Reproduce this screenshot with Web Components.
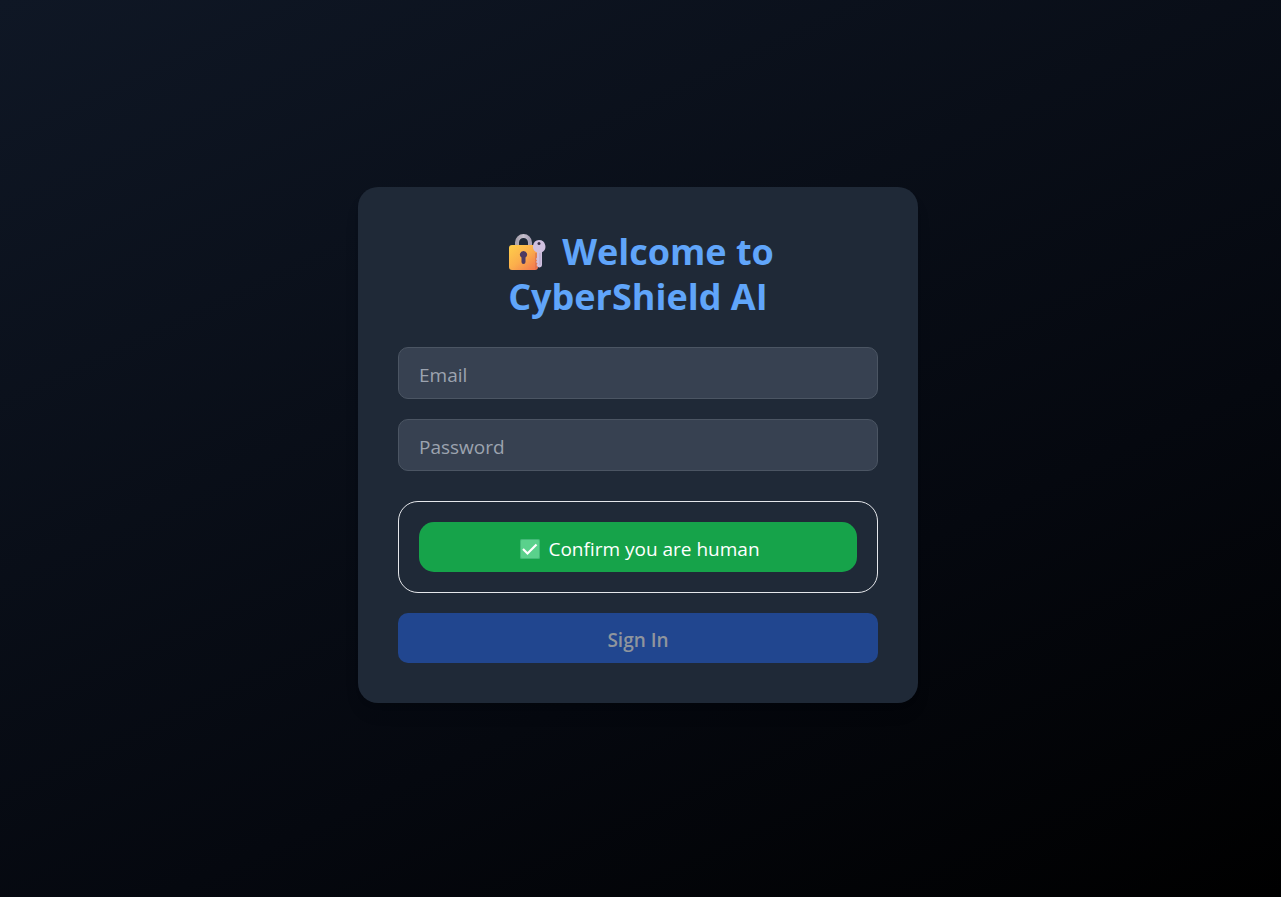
<!DOCTYPE html>
<html lang="en">
<head>
<meta charset="UTF-8">
<meta name="viewport" content="width=device-width, initial-scale=1.0">
<title>CyberShield AI</title>
<style>
    body {
        margin: 0;
        background-color: #000;
        font-family: "Open Sans", "Noto Sans", sans-serif;
    }
</style>
</head>
<body>

<login-page>
    <login-card>
        <login-title slot="title">Welcome to<br>CyberShield AI</login-title>
        <text-field type="email" name="email" placeholder="Email"></text-field>
        <text-field type="password" name="password" placeholder="Password"></text-field>
        <human-check>Confirm you are human</human-check>
        <submit-button disabled>Sign In</submit-button>
    </login-card>
</login-page>

<script>
class LoginPage extends HTMLElement {

    constructor() {
        super();
        this.attachShadow({mode: 'open'});
        this.shadowRoot.innerHTML =
        `
        <style>
        :host {
            display: block;
            background: linear-gradient(155deg, #0f1725, #05080f 65%, #000);
        }
        main {
            box-sizing: border-box;
            min-height: 100vh;
            display: flex;
            align-items: center;
            justify-content: center;
            padding: 0 5px 7px 0;
        }
        </style>
        <main><slot></slot></main>
        `;
    }
}

class LoginCard extends HTMLElement {

    constructor() {
        super();
        this.attachShadow({mode: 'open'});
        this.shadowRoot.innerHTML =
        `
        <style>
        :host {
            display: block;
            box-sizing: border-box;
            width: 100%;
            max-width: 560px;
            padding: 40px;
            border-radius: 20px;
            background-color: #1f2937;
            box-shadow: 0 12px 18px -4px rgba(0, 0, 0, 0.1), 0 5px 8px -5px rgba(0, 0, 0, 0.1);
        }
        form {
            display: flex;
            flex-direction: column;
            gap: 20px;
            margin: 0;
        }
        ::slotted(human-check) {
            margin-top: 10px;
        }
        </style>
        <slot name="title"></slot>
        <form><slot></slot></form>
        `;
    }
}

class LoginTitle extends HTMLElement {

    constructor() {
        super();
        this.attachShadow({mode: 'open'});
        this.shadowRoot.innerHTML =
        `
        <style>
        :host {
            display: flex;
            justify-content: center;
            padding: 2px 0 28px;
        }
        h1 {
            margin: 0;
            padding-left: 6px;
            color: #60a5fa;
            font-size: 36px;
            line-height: 45px;
            font-weight: 700;
        }
        svg {
            width: 38px;
            height: 38px;
            margin-right: 16px;
            vertical-align: -7px;
        }
        </style>
        <h1><svg viewBox="0 0 38 38" aria-hidden="true">
            <defs>
                <linearGradient id="body" x1="0" y1="0" x2="1" y2="1">
                    <stop offset="0" stop-color="#ffcf4a"/>
                    <stop offset="0.5" stop-color="#fbae4c"/>
                    <stop offset="1" stop-color="#f2704f"/>
                </linearGradient>
                <linearGradient id="shackle" x1="0" y1="0" x2="1" y2="0">
                    <stop offset="0" stop-color="#a8a2ae"/>
                    <stop offset="0.5" stop-color="#c6bfcd"/>
                    <stop offset="1" stop-color="#a79fb3"/>
                </linearGradient>
            </defs>
            <path d="M9 14V8.500a6.500 6.500 0 0 1 13 0V14" fill="none" stroke="url(#shackle)" stroke-width="4"/>
            <rect x="1" y="11" width="29" height="25" rx="3" fill="url(#body)"/>
            <path d="M15.500 17a3.600 3.600 0 0 1 2 6.600V28a2 2 0 0 1-4 0v-4.400a3.600 3.600 0 0 1 2-6.600z" fill="#4d3b62"/>
            <path d="M27 19h3v14l-3 2z" fill="#c4614f" opacity="0.4"/>
            <path fill-rule="evenodd" d="M31 6a6.500 6.500 0 0 1 3 12.200V31a2.500 2.500 0 0 1-4.500 1.500L28.500 31l1-1.500-1.500-1.500 1-1.500-1-1.500 1-1.500v-5A6.500 6.500 0 0 1 31 6z" fill="#d0c0df"/>
            <circle cx="31" cy="9.500" r="1.500" fill="#3a3048"/>
            <path d="M32 19v12" stroke="#b5a5c8" stroke-width="1"/>
        </svg><slot></slot></h1>
        `;
    }
}

class TextField extends HTMLElement {

    constructor() {
        super();
        this.attachShadow({mode: 'open'});
        this.shadowRoot.innerHTML =
        `
        <style>
        :host {
            display: block;
        }
        input {
            display: block;
            box-sizing: border-box;
            width: 100%;
            height: 52px;
            padding: 4px 20px 0;
            border: 1px solid #4b5563;
            border-radius: 10px;
            background-color: #374151;
            color: #fff;
            font: inherit;
            font-size: 19px;
        }
        input::placeholder {
            color: #9ca3af;
        }
        input:focus {
            outline: 2px solid #3b82f6;
        }
        </style>
        <input>
        `;
        const input = this.shadowRoot.querySelector('input');
        input.type = this.getAttribute('type');
        input.name = this.getAttribute('name');
        input.placeholder = this.getAttribute('placeholder');
        input.setAttribute('aria-label', this.getAttribute('placeholder'));
    }
}

class HumanCheck extends HTMLElement {

    constructor() {
        super();
        this.attachShadow({mode: 'open'});
        this.shadowRoot.innerHTML =
        `
        <style>
        :host {
            display: block;
            padding: 20px;
            border: 1px solid #e5e7eb;
            border-radius: 20px;
        }
        button {
            display: flex;
            align-items: center;
            justify-content: center;
            gap: 8px;
            width: 100%;
            height: 50px;
            padding: 4px 0 0 4px;
            border: none;
            border-radius: 15px;
            background-color: #16a34a;
            color: #fff;
            font: inherit;
            font-size: 19px;
        }
        button:hover {
            background-color: #15803d;
        }
        svg {
            width: 20px;
            height: 20px;
        }
        </style>
        <button type="button">
            <svg viewBox="0 0 20 20" aria-hidden="true">
                <rect width="20" height="20" rx="1.500" fill="#43b978"/>
                <rect x="1" y="1" width="18" height="18" rx="1" fill="#5ad18c"/>
                <path d="M3 10l4.500 4.500 9-9" fill="none" stroke="#fff" stroke-width="2.200"/>
            </svg>
            <span><slot></slot></span>
        </button>
        `;
    }
}

class SubmitButton extends HTMLElement {

    constructor() {
        super();
        this.attachShadow({mode: 'open'});
        this.shadowRoot.innerHTML =
        `
        <style>
        :host {
            display: block;
        }
        button {
            display: block;
            width: 100%;
            height: 50px;
            padding: 4px 0 0;
            border: none;
            border-radius: 10px;
            background-color: #2563eb;
            color: #fff;
            font: inherit;
            font-size: 19px;
            font-weight: 600;
        }
        button:disabled {
            background-color: #21468f;
            color: #8f959d;
        }
        </style>
        <button type="submit"><slot></slot></button>
        `;
        this.shadowRoot.querySelector('button').disabled = this.hasAttribute('disabled');
    }
}

customElements.define('login-page', LoginPage);
customElements.define('login-card', LoginCard);
customElements.define('login-title', LoginTitle);
customElements.define('text-field', TextField);
customElements.define('human-check', HumanCheck);
customElements.define('submit-button', SubmitButton);
</script>
</body>
</html>
